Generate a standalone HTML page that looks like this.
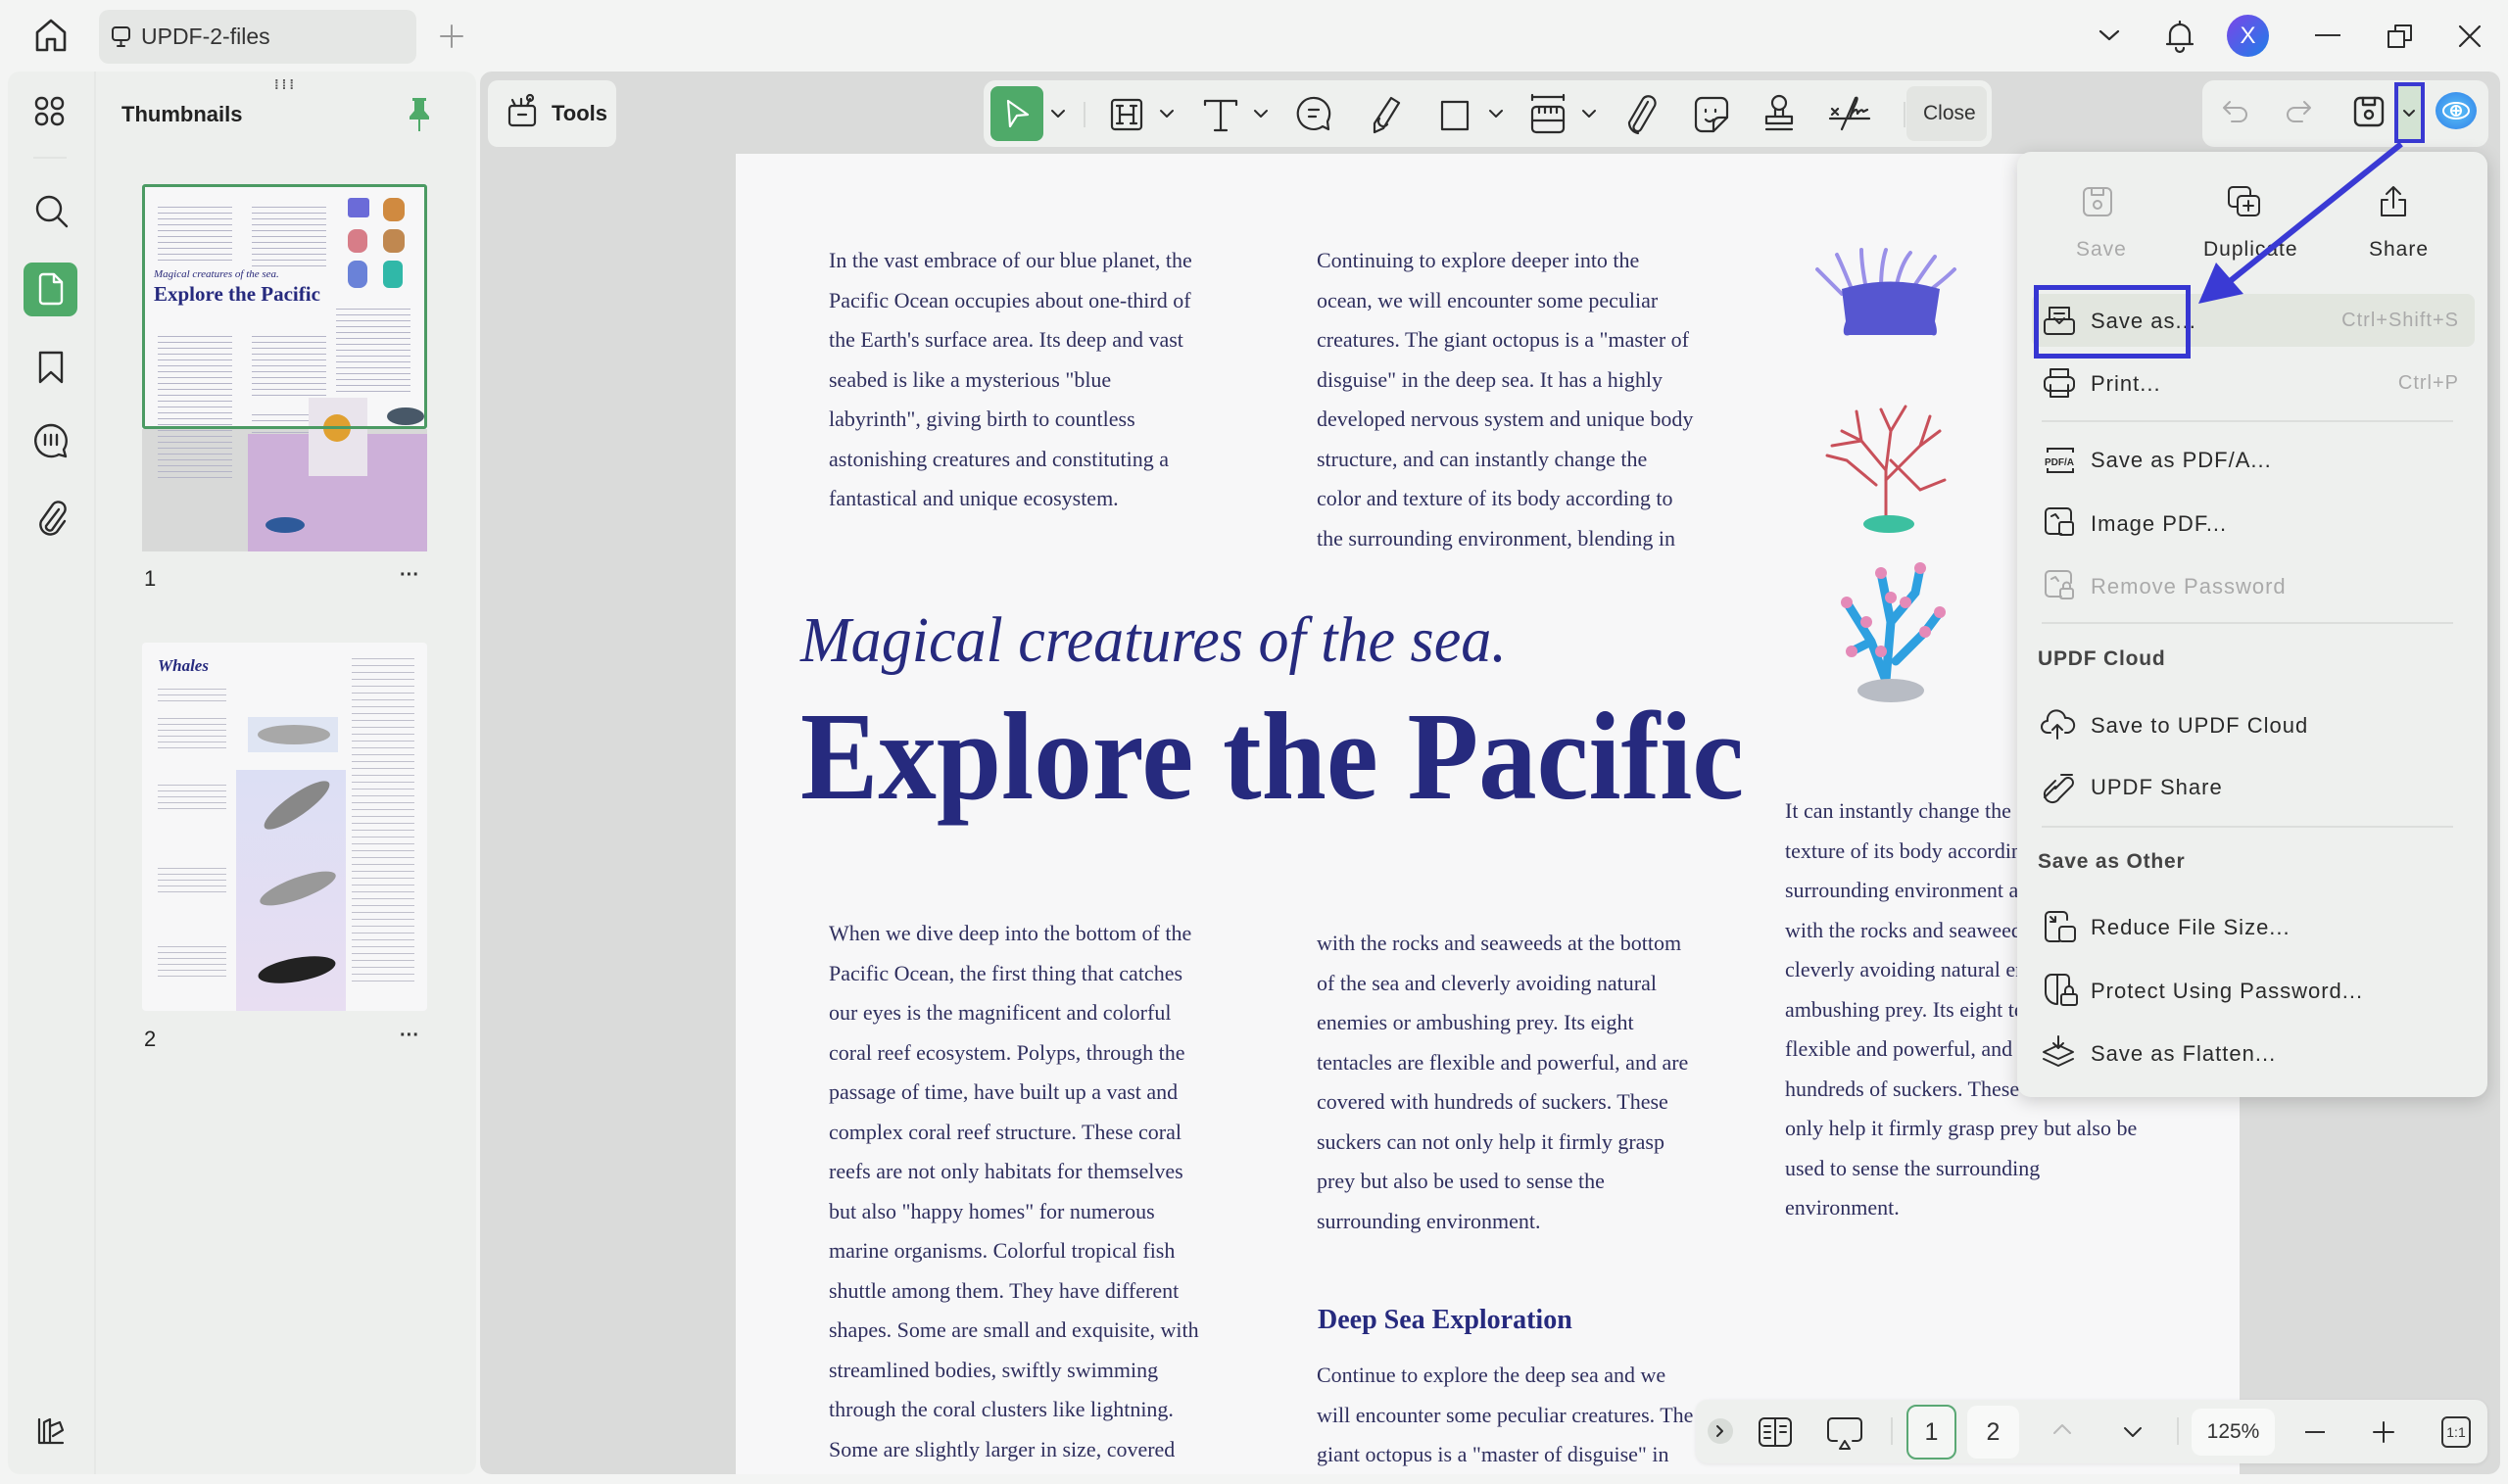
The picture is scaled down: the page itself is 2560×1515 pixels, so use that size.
<!DOCTYPE html>
<html><head><meta charset="utf-8">
<style>
*{margin:0;padding:0;box-sizing:border-box}
body{width:2560px;height:1515px;background:#f3f4f3;font-family:"Liberation Sans",sans-serif;position:relative;overflow:hidden;color:#222}
.a{position:absolute}
svg{position:absolute;overflow:visible}
.ic{fill:none;stroke:#2b2b2b;stroke-width:2.6;stroke-linecap:round;stroke-linejoin:round}
.serif{font-family:"Liberation Serif",serif}
.ln{position:absolute;font-family:"Liberation Serif",serif;font-size:22px;line-height:40.5px;color:#2f2f5e;white-space:nowrap}
.mi{position:absolute;left:2134px;font-size:22px;letter-spacing:1px;color:#2a2a2a;white-space:nowrap}
.mh{position:absolute;left:2080px;font-size:21px;font-weight:bold;letter-spacing:0.8px;color:#444;white-space:nowrap}
.sep{position:absolute;left:2084px;width:420px;height:2px;background:#dcdedc}
.sc{position:absolute;right:50px;font-size:20px;color:#aaa;letter-spacing:1px}
</style></head><body>

<!-- top bar -->
<svg class="ic" style="left:34px;top:18px" width="36" height="36" viewBox="0 0 36 36"><path d="M4 15 L18 3 L32 15 V33 H22 V22 H14 V33 H4 Z"/></svg>
<div class="a" style="left:101px;top:10px;width:324px;height:55px;background:#e5e7e5;border-radius:10px"></div>
<svg class="ic" style="left:114px;top:27px;stroke-width:2" width="20" height="22"><rect x="1" y="1" width="17" height="13" rx="3"/><path d="M9.5 14 V20 M6 20 H13"/></svg>
<div class="a" style="left:144px;top:24px;font-size:23px;color:#333">UPDF-2-files</div>
<svg class="ic" style="left:449px;top:25px;stroke:#999;stroke-width:2" width="24" height="24"><path d="M12 1 V23 M1 12 H23"/></svg>
<svg class="ic" style="left:2142px;top:30px;stroke-width:2.2" width="22" height="12"><path d="M2 2 L11 10 L20 2"/></svg>
<svg class="ic" style="left:2210px;top:20px;stroke-width:2.2" width="30" height="34"><path d="M5 25 V15 A10 10 0 0 1 25 15 V25 H2 H28 M11 29 A4 4 0 0 0 19 29 M15 2 V5"/></svg>
<div class="a" style="left:2273px;top:15px;width:43px;height:43px;border-radius:50%;background:linear-gradient(135deg,#7b45e8,#1e7ee8);color:#fff;font-size:24px;text-align:center;line-height:43px">X</div>
<div class="a" style="left:2363px;top:35px;width:26px;height:2px;background:#333"></div>
<svg class="ic" style="left:2437px;top:24px;stroke-width:2" width="26" height="26"><rect x="1" y="8" width="16" height="16"/><path d="M8 8 V2 H24 V17 H17"/></svg>
<svg class="ic" style="left:2510px;top:26px;stroke-width:2.2" width="22" height="22"><path d="M1 1 L21 21 M21 1 L1 21"/></svg>

<!-- sidebar -->
<div class="a" style="left:8px;top:73px;width:478px;height:1432px;background:#edefed;border-radius:12px"></div>
<div class="a" style="left:96px;top:73px;width:2px;height:1432px;background:#e6e8e6"></div>
<svg class="ic" style="left:36px;top:99px;stroke-width:2.4" width="30" height="30"><rect x="1" y="1" width="11" height="11" rx="5"/><rect x="17" y="1" width="11" height="11" rx="5"/><rect x="1" y="17" width="11" height="11" rx="5"/><rect x="17" y="17" width="11" height="11" rx="5"/></svg>
<div class="a" style="left:34px;top:160px;width:34px;height:2px;background:#e2e4e2"></div>
<svg class="ic" style="left:36px;top:199px;stroke-width:2.4" width="34" height="34"><circle cx="14" cy="14" r="12"/><path d="M23 23 L32 32"/></svg>
<div class="a" style="left:24px;top:268px;width:55px;height:55px;background:#4faa69;border-radius:9px"></div>
<svg class="ic" style="left:39px;top:279px;stroke:#fff;stroke-width:2.4" width="26" height="32"><path d="M2 4 A3 3 0 0 1 5 1 H16 L24 9 V28 A3 3 0 0 1 21 31 H5 A3 3 0 0 1 2 28 Z M16 1 V9 H24"/></svg>
<svg class="ic" style="left:39px;top:358px;stroke-width:2.4" width="26" height="34"><path d="M2 2 H24 V32 L13 22 L2 32 Z"/></svg>
<svg class="ic" style="left:34px;top:432px;stroke-width:2.4" width="36" height="36"><path d="M18 2 A16 16 0 1 0 26 32 L33 34 L31 27 A16 16 0 0 0 18 2 Z M12 12 V22 M18 12 V22 M24 12 V22"/></svg>
<svg class="ic" style="left:38px;top:510px;stroke-width:2.4" width="30" height="38"><path d="M22 10 L9 27 A4 4 0 0 0 15 31 L27 14 A7 7 0 0 0 16 5 L4 22 A10 10 0 0 0 20 33 L28 22"/></svg>
<svg class="ic" style="left:37px;top:1446px;stroke-width:2.2" width="30" height="30"><path d="M3 3 V27 H27 M8 27 V6 L14 3 V27 M14 10 L24 6 L27 14 L17 20"/></svg>

<div class="a" style="left:280px;top:78px;font-size:14px;color:#555;letter-spacing:3px;font-weight:bold">⁞⁞⁞</div>
<div class="a" style="left:124px;top:104px;font-size:22px;font-weight:bold;color:#222">Thumbnails</div>
<svg style="left:416px;top:99px" width="24" height="36"><path d="M5 1 H19 V4 H17 V14 L22 20 V23 H2 V20 L7 14 V4 H5 Z" fill="#4faa69"/><rect x="11" y="23" width="2" height="12" fill="#4faa69"/></svg>

<!-- thumb 1 -->
<div class="a" style="left:145px;top:188px;width:291px;height:375px;background:#d8d9d8;overflow:hidden">
  <div class="a" style="left:0;top:0;width:291px;height:250px;background:#f7f7f8"></div>
  <div class="a" style="left:16px;top:18px;width:76px;height:60px;background:repeating-linear-gradient(#f7f7f8 0 5px,#b5b5c8 5px 6px)"></div>
  <div class="a" style="left:112px;top:18px;width:76px;height:70px;background:repeating-linear-gradient(#f7f7f8 0 5px,#b5b5c8 5px 6px)"></div>
  <div class="a" style="left:210px;top:14px;width:22px;height:20px;background:#6b6bd8;border-radius:3px"></div>
  <div class="a" style="left:246px;top:14px;width:22px;height:24px;background:#d08a40;border-radius:8px"></div>
  <div class="a" style="left:210px;top:46px;width:20px;height:24px;background:#d77d88;border-radius:8px"></div>
  <div class="a" style="left:246px;top:46px;width:22px;height:24px;background:#c08850;border-radius:8px"></div>
  <div class="a" style="left:210px;top:78px;width:20px;height:28px;background:#6a82d8;border-radius:8px"></div>
  <div class="a" style="left:246px;top:78px;width:20px;height:28px;background:#30b8a8;border-radius:6px"></div>
  <div class="a serif" style="left:12px;top:86px;font-size:11px;font-style:italic;color:#2a2a7a">Magical creatures of the sea.</div>
  <div class="a serif" style="left:12px;top:100px;font-size:21px;font-weight:bold;color:#262a7e">Explore the Pacific</div>
  <div class="a" style="left:16px;top:150px;width:76px;height:150px;background:repeating-linear-gradient(transparent 0 5px,#b5b5c8 5px 6px)"></div>
  <div class="a" style="left:112px;top:150px;width:76px;height:70px;background:repeating-linear-gradient(transparent 0 5px,#b5b5c8 5px 6px)"></div>
  <div class="a" style="left:198px;top:122px;width:76px;height:95px;background:repeating-linear-gradient(transparent 0 5px,#b5b5c8 5px 6px)"></div>
  <div class="a" style="left:112px;top:230px;width:70px;height:50px;background:repeating-linear-gradient(transparent 0 5px,#b5b5c8 5px 6px)"></div>
  <div class="a" style="left:108px;top:255px;width:183px;height:120px;background:#cdb0d9"></div>
  <div class="a" style="left:170px;top:218px;width:60px;height:80px;background:#e9e4ec"></div>
  <div class="a" style="left:185px;top:235px;width:28px;height:28px;background:#e0a030;border-radius:50%"></div>
  <div class="a" style="left:126px;top:340px;width:40px;height:16px;background:#2e5a9a;border-radius:50%"></div>
  <div class="a" style="left:250px;top:228px;width:38px;height:18px;background:#485868;border-radius:50%"></div>
  <div class="a" style="left:0;top:0;width:291px;height:250px;border:3px solid #4b9a63;border-radius:3px"></div>
</div>
<div class="a" style="left:147px;top:578px;font-size:22px;color:#222">1</div>
<div class="a" style="left:408px;top:576px;font-size:20px;color:#333;font-weight:bold">···</div>

<!-- thumb 2 -->
<div class="a" style="left:145px;top:656px;width:291px;height:376px;background:#f7f7f8;border-radius:4px;overflow:hidden">
  <div class="a serif" style="left:16px;top:14px;font-size:17px;font-weight:bold;font-style:italic;color:#262a7e">Whales</div>
  <div class="a" style="left:16px;top:42px;width:70px;height:18px;background:repeating-linear-gradient(transparent 0 5px,#c0c0cc 5px 6px)"></div>
  <div class="a" style="left:16px;top:72px;width:70px;height:40px;background:repeating-linear-gradient(transparent 0 5px,#c0c0cc 5px 6px)"></div>
  <div class="a" style="left:16px;top:140px;width:70px;height:30px;background:repeating-linear-gradient(transparent 0 5px,#c0c0cc 5px 6px)"></div>
  <div class="a" style="left:16px;top:225px;width:70px;height:35px;background:repeating-linear-gradient(transparent 0 5px,#c0c0cc 5px 6px)"></div>
  <div class="a" style="left:16px;top:305px;width:70px;height:40px;background:repeating-linear-gradient(transparent 0 5px,#c0c0cc 5px 6px)"></div>
  <div class="a" style="left:96px;top:130px;width:112px;height:246px;background:linear-gradient(#dcdff4,#e8def2)"></div>
  <div class="a" style="left:108px;top:76px;width:92px;height:36px;background:#dfe5f3"></div>
  <div class="a" style="left:118px;top:84px;width:74px;height:20px;background:#a8a8a8;border-radius:50%"></div>
  <div class="a" style="left:118px;top:155px;width:80px;height:22px;background:#888;border-radius:50%;transform:rotate(-35deg)"></div>
  <div class="a" style="left:118px;top:240px;width:82px;height:22px;background:#999;border-radius:50%;transform:rotate(-20deg)"></div>
  <div class="a" style="left:118px;top:322px;width:80px;height:24px;background:#222;border-radius:50%;transform:rotate(-10deg)"></div>
  <div class="a" style="left:214px;top:10px;width:64px;height:340px;background:repeating-linear-gradient(transparent 0 6px,#c0c0cc 6px 7px)"></div>
</div>
<div class="a" style="left:147px;top:1048px;font-size:22px;color:#222">2</div>
<div class="a" style="left:408px;top:1046px;font-size:20px;color:#333;font-weight:bold">···</div>

<!-- main area -->
<div class="a" style="left:490px;top:73px;width:2062px;height:1432px;background:#dadbda;border-radius:12px;overflow:hidden">
  <div class="a" style="left:261px;top:84px;width:1535px;height:1400px;background:#f7f7f8"></div>
</div>

<!-- page content -->
<div class="ln" style="left:846px;top:246px">In the vast embrace of our blue planet, the<br>Pacific Ocean occupies about one-third of<br>the Earth's surface area. Its deep and vast<br>seabed is like a mysterious "blue<br>labyrinth", giving birth to countless<br>astonishing creatures and constituting a<br>fantastical and unique ecosystem.</div>
<div class="ln" style="left:1344px;top:246px">Continuing to explore deeper into the<br>ocean, we will encounter some peculiar<br>creatures. The giant octopus is a "master of<br>disguise" in the deep sea. It has a highly<br>developed nervous system and unique body<br>structure, and can instantly change the<br>color and texture of its body according to<br>the surrounding environment, blending in</div>
<div class="a serif" style="left:817px;top:616px;font-size:66px;font-style:italic;color:#262a7e;white-space:nowrap;transform:scaleX(0.94);transform-origin:left">Magical creatures of the sea.</div>
<div class="a serif" style="left:817px;top:702px;font-size:128px;font-weight:bold;color:#262a7e;white-space:nowrap;transform:scaleX(0.93);transform-origin:left;line-height:1.1">Explore the Pacific</div>
<div class="ln" style="left:846px;top:933px">When we dive deep into the bottom of the<br>Pacific Ocean, the first thing that catches<br>our eyes is the magnificent and colorful<br>coral reef ecosystem. Polyps, through the<br>passage of time, have built up a vast and<br>complex coral reef structure. These coral<br>reefs are not only habitats for themselves<br>but also "happy homes" for numerous<br>marine organisms. Colorful tropical fish<br>shuttle among them. They have different<br>shapes. Some are small and exquisite, with<br>streamlined bodies, swiftly swimming<br>through the coral clusters like lightning.<br>Some are slightly larger in size, covered</div>
<div class="ln" style="left:1344px;top:943px">with the rocks and seaweeds at the bottom<br>of the sea and cleverly avoiding natural<br>enemies or ambushing prey. Its eight<br>tentacles are flexible and powerful, and are<br>covered with hundreds of suckers. These<br>suckers can not only help it firmly grasp<br>prey but also be used to sense the<br>surrounding environment.</div>
<div class="a serif" style="left:1345px;top:1332px;font-size:28px;font-weight:bold;color:#262a7e">Deep Sea Exploration</div>
<div class="ln" style="left:1344px;top:1384px">Continue to explore the deep sea and we<br>will encounter some peculiar creatures. The<br>giant octopus is a "master of disguise" in</div>
<div class="ln" style="left:1822px;top:808px">It can instantly change the color and<br>texture of its body according to the<br>surrounding environment and blend in<br>with the rocks and seaweeds at the<br>cleverly avoiding natural enemies or<br>ambushing prey. Its eight tentacles are<br>flexible and powerful, and are covered<br>hundreds of suckers. These suckers can<br>only help it firmly grasp prey but also be<br>used to sense the surrounding<br>environment.</div>

<!-- coral images -->
<svg style="left:1850px;top:250px" width="160" height="120" viewBox="0 0 160 120">
  <g stroke="#9a90e8" stroke-width="4" fill="none" stroke-linecap="round">
    <path d="M30 50 Q10 30 5 25 M40 45 Q30 20 25 10 M55 45 Q50 20 50 5 M70 45 Q70 20 75 5 M85 45 Q90 20 100 8 M100 48 Q115 25 125 12 M115 50 Q135 35 145 25"/></g>
  <path d="M30 45 Q80 30 130 45 L125 78 Q130 95 122 92 L38 92 Q28 95 34 78 Z" fill="#5656d0"/>
</svg>
<svg style="left:1860px;top:410px" width="140" height="140" viewBox="0 0 140 140">
  <g stroke="#c8505a" stroke-width="3" fill="none" stroke-linecap="round">
    <path d="M65 120 V70 L40 40 L20 30 M40 40 L35 10 M65 70 L70 30 L60 8 M70 30 L85 5 M65 80 L100 45 L120 30 M100 45 L110 15 M55 85 L25 60 L5 55 M70 60 L100 90 L125 80 M40 40 L10 45"/></g>
  <ellipse cx="68" cy="125" rx="26" ry="9" fill="#3cc0a0"/>
</svg>
<svg style="left:1865px;top:565px" width="130" height="160" viewBox="0 0 130 160">
  <g stroke="#2ea0e0" stroke-width="9" fill="none" stroke-linecap="round">
    <path d="M60 130 L45 90 L20 50 M45 90 L25 100 M60 130 L65 70 L55 20 M65 70 L90 40 L95 15 M70 110 L100 80 L115 60"/></g>
  <g fill="#e48ab8"><circle cx="20" cy="50" r="6"/><circle cx="55" cy="20" r="6"/><circle cx="95" cy="15" r="6"/><circle cx="115" cy="60" r="6"/><circle cx="25" cy="100" r="6"/><circle cx="40" cy="70" r="6"/><circle cx="80" cy="50" r="6"/><circle cx="100" cy="80" r="6"/><circle cx="65" cy="45" r="6"/><circle cx="55" cy="100" r="6"/></g>
  <ellipse cx="65" cy="140" rx="34" ry="12" fill="#b8bcc4"/>
</svg>

<!-- Tools button -->
<div class="a" style="left:498px;top:82px;width:131px;height:68px;background:#eef0ee;border-radius:10px"></div>
<svg class="ic" style="left:518px;top:96px;stroke-width:2.2" width="30" height="34"><rect x="2" y="12" width="26" height="20" rx="3"/><path d="M11 21 H19 M8 12 L5 6 M14 12 V5 M20 12 L23 5"/><circle cx="23" cy="4" r="3"/></svg>
<div class="a" style="left:563px;top:103px;font-size:22px;font-weight:bold;color:#222">Tools</div>

<!-- main toolbar -->
<div class="a" style="left:1004px;top:82px;width:1029px;height:68px;background:#eef0ee;border-radius:12px"></div>
<div class="a" style="left:1011px;top:88px;width:54px;height:56px;background:#4faa69;border-radius:8px"></div>
<svg class="ic" style="left:1026px;top:101px;stroke:#fff;stroke-width:2.2" width="26" height="30"><path d="M3 2 L23 16 L12 17 L5 28 Z"/></svg>
<svg class="ic" style="left:1073px;top:112px;stroke-width:2" width="14" height="8"><path d="M1 1 L7 7 L13 1"/></svg>
<div class="a" style="left:1106px;top:104px;width:2px;height:26px;background:#d8dad8"></div>
<svg class="ic" style="left:1133px;top:100px;stroke-width:2.2" width="34" height="34"><rect x="2" y="2" width="30" height="30" rx="3"/><path d="M10 8 V26 M24 8 V26 M10 17 H24 M7 8 H13 M21 8 H27 M7 26 H13 M21 26 H27"/></svg>
<svg class="ic" style="left:1184px;top:112px;stroke-width:2" width="14" height="8"><path d="M1 1 L7 7 L13 1"/></svg>
<svg class="ic" style="left:1228px;top:100px;stroke-width:2.2" width="36" height="36"><path d="M2 3 H34 M18 3 V33 M12 33 H24 M2 3 V7 M34 3 V7"/></svg>
<svg class="ic" style="left:1280px;top:112px;stroke-width:2" width="14" height="8"><path d="M1 1 L7 7 L13 1"/></svg>
<svg class="ic" style="left:1324px;top:98px;stroke-width:2.2" width="36" height="38"><path d="M18 2 A16 16 0 1 0 26 31 L32 34 L31 26 A16 16 0 0 0 18 2 Z M12 14 H22 M12 21 H19"/></svg>
<svg class="ic" style="left:1398px;top:97px;stroke-width:2.2" width="34" height="40"><path d="M22 3 L30 8 L14 34 L5 38 L5 29 Z M10 24 A5 5 0 0 0 18 30"/></svg>
<svg class="ic" style="left:1470px;top:102px;stroke-width:2.2" width="30" height="32"><rect x="2" y="2" width="26" height="28"/></svg>
<svg class="ic" style="left:1520px;top:112px;stroke-width:2" width="14" height="8"><path d="M1 1 L7 7 L13 1"/></svg>
<svg class="ic" style="left:1562px;top:97px;stroke-width:2.2" width="36" height="40"><path d="M2 2 H34 M2 0 V5 M34 0 V5 M2 16 A4 4 0 0 1 6 12 H30 A4 4 0 0 1 34 16 V34 A4 4 0 0 1 30 38 H6 A4 4 0 0 1 2 34 Z M2 26 H34 M9 12 V18 M15 12 V18 M21 12 V18 M27 12 V18"/></svg>
<svg class="ic" style="left:1615px;top:112px;stroke-width:2" width="14" height="8"><path d="M1 1 L7 7 L13 1"/></svg>
<svg class="ic" style="left:1658px;top:96px;stroke-width:2.2" width="34" height="42"><path d="M24 8 L10 32 A4 4 0 0 0 17 36 L31 12 A7 7 0 0 0 19 5 L5 29 A11 11 0 0 0 14 40"/></svg>
<svg class="ic" style="left:1729px;top:98px;stroke-width:2.2" width="36" height="38"><path d="M8 2 H28 A6 6 0 0 1 34 8 V22 L20 36 H8 A6 6 0 0 1 2 30 V8 A6 6 0 0 1 8 2 Z M20 36 V28 A6 6 0 0 1 26 22 H34 M12 14 V16 M22 14 V16 M12 24 Q16 28 20 24"/></svg>
<svg class="ic" style="left:1799px;top:96px;stroke-width:2.2" width="34" height="40"><circle cx="17" cy="9" r="7"/><path d="M13 16 V23 M21 16 V23 M4 23 H30 V30 H4 Z M4 36 H30"/></svg>
<svg class="ic" style="left:1866px;top:96px;stroke-width:2.2" width="44" height="40"><path d="M2 25 H42 M4 15 L10 21 M10 15 L4 21 M14 36 Q22 18 28 4 Q32 2 26 14 Q20 30 24 20 Q30 12 30 20 Q34 14 36 18 L40 16"/></svg>
<div class="a" style="left:1943px;top:104px;width:2px;height:26px;background:#d8dad8"></div>
<div class="a" style="left:1946px;top:88px;width:82px;height:56px;background:#e3e5e2;border-radius:8px"></div>
<div class="a" style="left:1963px;top:104px;font-size:21px;color:#333">Close</div>

<!-- right toolbar -->
<div class="a" style="left:2248px;top:82px;width:292px;height:68px;background:#eef0ee;border-radius:12px"></div>
<svg class="ic" style="left:2268px;top:102px;stroke:#aaa;stroke-width:2" width="28" height="22"><path d="M8 2 L2 8 L8 14 M2 8 H18 A7 7 0 0 1 18 22 H10"/></svg>
<svg class="ic" style="left:2332px;top:102px;stroke:#aaa;stroke-width:2" width="28" height="22"><path d="M20 2 L26 8 L20 14 M26 8 H10 A7 7 0 0 0 10 22 H18"/></svg>
<svg class="ic" style="left:2402px;top:98px;stroke-width:2.4" width="32" height="32"><rect x="2" y="2" width="28" height="28" rx="5"/><path d="M10 2 V9 H22 V2"/><circle cx="16" cy="19" r="4"/></svg>
<div class="a" style="left:2444px;top:84px;width:31px;height:62px;background:#d3e3d3;border:4px solid #3939d2"></div>
<svg class="ic" style="left:2453px;top:112px;stroke-width:2" width="12" height="7"><path d="M1 1 L6 6 L11 1"/></svg>
<div class="a" style="left:2486px;top:94px;width:42px;height:38px;border-radius:50%;background:radial-gradient(#5cc4f8,#2f7ee8)"></div>
<svg class="ic" style="left:2492px;top:100px;stroke:#fff;stroke-width:2" width="30" height="26"><ellipse cx="15" cy="13" rx="13" ry="8"/><circle cx="15" cy="13" r="5"/><path d="M15 10 V16 M12 13 H18"/></svg>

<!-- dropdown menu -->
<div class="a" style="left:2059px;top:155px;width:480px;height:965px;background:#eef0ee;border-radius:14px;box-shadow:0 4px 18px rgba(0,0,0,.18)"></div>
<svg class="ic" style="left:2125px;top:190px;stroke:#aaa;stroke-width:2" width="32" height="32"><rect x="2" y="2" width="28" height="28" rx="5"/><path d="M10 2 V9 H22 V2"/><circle cx="16" cy="19" r="4"/></svg>
<div class="a" style="left:2119px;top:243px;font-size:21px;color:#aaa;letter-spacing:1px">Save</div>
<svg class="ic" style="left:2274px;top:190px;stroke-width:2" width="34" height="32"><rect x="1" y="1" width="22" height="20" rx="4"/><rect x="10" y="10" width="22" height="20" rx="4" fill="#eef0ee"/><path d="M21 15 V25 M16 20 H26"/></svg>
<div class="a" style="left:2249px;top:243px;font-size:21px;color:#2a2a2a;letter-spacing:1px">Duplicate</div>
<svg class="ic" style="left:2428px;top:188px;stroke-width:2" width="30" height="34"><path d="M15 24 V3 M8 10 L15 3 L22 10 M9 16 H3 V32 H27 V16 H21"/></svg>
<div class="a" style="left:2418px;top:243px;font-size:21px;color:#2a2a2a;letter-spacing:1px">Share</div>

<div class="a" style="left:2074px;top:300px;width:452px;height:54px;background:#e2e6df;border-radius:8px"></div>
<svg class="ic" style="left:2086px;top:312px;stroke-width:2" width="32" height="32"><rect x="1" y="14" width="30" height="15" rx="3"/><path d="M6 14 V2 H26 V14 M11 8 H21 M11 13 L16 18 L21 13"/></svg>
<div class="mi" style="top:315px">Save as...</div><div class="sc" style="top:316px">Ctrl+Shift+S</div>
<svg class="ic" style="left:2086px;top:375px;stroke-width:2" width="32" height="32"><rect x="1" y="10" width="30" height="14" rx="5"/><path d="M7 10 V2 H25 V10 M7 18 V30 H25 V18"/></svg>
<div class="mi" style="top:379px">Print...</div><div class="sc" style="top:380px">Ctrl+P</div>
<div class="sep" style="top:429px"></div>
<svg style="left:2086px;top:454px" width="34" height="32"><path d="M4 8 V4 H30 V8 M4 24 V28 H30 V24" fill="none" stroke="#2b2b2b" stroke-width="2"/><text x="1" y="21" font-family="Liberation Sans" font-size="10" font-weight="bold" fill="#2b2b2b">PDF/A</text></svg>
<div class="mi" style="top:457px">Save as PDF/A...</div>
<svg class="ic" style="left:2086px;top:517px;stroke-width:2" width="32" height="32"><path d="M18 28 H6 A4 4 0 0 1 2 24 V6 A4 4 0 0 1 6 2 H24 A4 4 0 0 1 28 6 V14 M8 10 L12 8 L15 12"/><rect x="16" y="16" width="14" height="13" rx="2"/></svg>
<div class="mi" style="top:522px">Image PDF...</div>
<svg class="ic" style="left:2086px;top:581px;stroke:#aaa;stroke-width:2" width="32" height="32"><path d="M18 28 H6 A4 4 0 0 1 2 24 V6 A4 4 0 0 1 6 2 H24 A4 4 0 0 1 28 6 V14 M8 10 L12 8 L15 12"/><rect x="17" y="20" width="13" height="10" rx="2"/><path d="M20 20 V17 A3 3 0 0 1 27 17 V20"/></svg>
<div class="mi" style="top:586px;color:#aaa">Remove Password</div>
<div class="sep" style="top:635px"></div>
<div class="mh" style="top:661px">UPDF Cloud</div>
<svg class="ic" style="left:2083px;top:724px;stroke-width:2" width="36" height="32"><path d="M10 24 H7 A6 6 0 0 1 7 12 A9 9 0 0 1 25 9 A7 7 0 0 1 28 24 H25 M17 30 V16 M12 21 L17 16 L22 21"/></svg>
<div class="mi" style="top:728px">Save to UPDF Cloud</div>
<svg class="ic" style="left:2084px;top:787px;stroke-width:2" width="34" height="32"><path d="M14 18 L24 8 A5 5 0 0 1 31 15 L18 28 A5 5 0 0 1 4 20 L14 10"/><path d="M3 27 L14 16 M20 4 L31 4"/></svg>
<div class="mi" style="top:791px">UPDF Share</div>
<div class="sep" style="top:843px"></div>
<div class="mh" style="top:868px">Save as Other</div>
<svg class="ic" style="left:2086px;top:929px;stroke-width:2" width="34" height="34"><path d="M16 32 H6 A4 4 0 0 1 2 28 V6 A4 4 0 0 1 6 2 H20 A4 4 0 0 1 24 6 V10 M7 7 L12 12 M7 12 H12 V7"/><rect x="16" y="17" width="16" height="15" rx="3"/></svg>
<div class="mi" style="top:934px">Reduce File Size...</div>
<svg class="ic" style="left:2086px;top:993px;stroke-width:2" width="36" height="34"><path d="M14 2 H8 A6 6 0 0 0 2 8 V20 A12 12 0 0 0 14 32 Z M14 2 H22 A4 4 0 0 1 26 6 V14"/><rect x="18" y="22" width="16" height="11" rx="2"/><path d="M22 22 V18 A4 4 0 0 1 30 18 V22"/></svg>
<div class="mi" style="top:999px">Protect Using Password...</div>
<svg class="ic" style="left:2083px;top:1056px;stroke-width:2" width="36" height="36"><path d="M18 2 V14 M13 9 L18 14 L23 9 M3 18 L18 11 L33 18 L18 25 Z M3 25 L18 32 L33 25"/></svg>
<div class="mi" style="top:1063px">Save as Flatten...</div>

<!-- annotation -->
<div class="a" style="left:2076px;top:291px;width:160px;height:75px;border:5px solid #3636d2"></div>
<svg style="left:0;top:0" width="2560" height="1515"><line x1="2451" y1="147" x2="2275" y2="288" stroke="#3a3ad4" stroke-width="6"/><polygon points="2244,310 2262,268 2290,300" fill="#3a3ad4"/></svg>

<!-- bottom bar -->
<div class="a" style="left:1731px;top:1429px;width:808px;height:65px;background:#eef0ee;border-radius:12px;box-shadow:0 1px 4px rgba(0,0,0,.08)"></div>
<div class="a" style="left:1743px;top:1448px;width:26px;height:26px;border-radius:50%;background:#d8dcd8"></div>
<svg class="ic" style="left:1752px;top:1455px;stroke-width:2" width="8" height="12"><path d="M1 1 L6 6 L1 11"/></svg>
<svg class="ic" style="left:1795px;top:1447px;stroke-width:2" width="34" height="30"><rect x="1" y="1" width="32" height="28" rx="5"/><path d="M17 1 V29 M6 9 H12 M6 15 H12 M6 21 H12 M22 9 H28 M22 15 H28"/></svg>
<svg class="ic" style="left:1865px;top:1447px;stroke-width:2" width="36" height="34"><path d="M10 24 H5 A4 4 0 0 1 1 20 V5 A4 4 0 0 1 5 1 H31 A4 4 0 0 1 35 5 V20 A4 4 0 0 1 31 24 H26 M13 32 L18 24 L23 32 Z"/></svg>
<div class="a" style="left:1930px;top:1447px;width:2px;height:28px;background:#d8dad8"></div>
<div class="a" style="left:1946px;top:1434px;width:51px;height:56px;border:2px solid #5aa874;border-radius:10px;background:#f4f6f4;text-align:center;line-height:52px;font-size:25px;color:#333">1</div>
<div class="a" style="left:2008px;top:1435px;width:53px;height:54px;border-radius:10px;background:#f8f9f8;text-align:center;line-height:54px;font-size:25px;color:#333">2</div>
<svg class="ic" style="left:2096px;top:1454px;stroke:#bbb;stroke-width:2" width="18" height="10"><path d="M1 9 L9 1 L17 9"/></svg>
<svg class="ic" style="left:2168px;top:1457px;stroke-width:2" width="18" height="10"><path d="M1 1 L9 9 L17 1"/></svg>
<div class="a" style="left:2222px;top:1447px;width:2px;height:28px;background:#d8dad8"></div>
<div class="a" style="left:2237px;top:1438px;width:85px;height:48px;border-radius:10px;background:#f8f9f8;text-align:center;line-height:48px;font-size:21px;color:#333">125%</div>
<div class="a" style="left:2353px;top:1461px;width:20px;height:2px;background:#333"></div>
<svg class="ic" style="left:2422px;top:1451px;stroke-width:2" width="22" height="22"><path d="M11 1 V21 M1 11 H21"/></svg>
<div class="a" style="left:2492px;top:1446px;width:30px;height:32px;border:2px solid #333;border-radius:6px;text-align:center;line-height:28px;font-size:14px;color:#333">1:1</div>
</body></html>
